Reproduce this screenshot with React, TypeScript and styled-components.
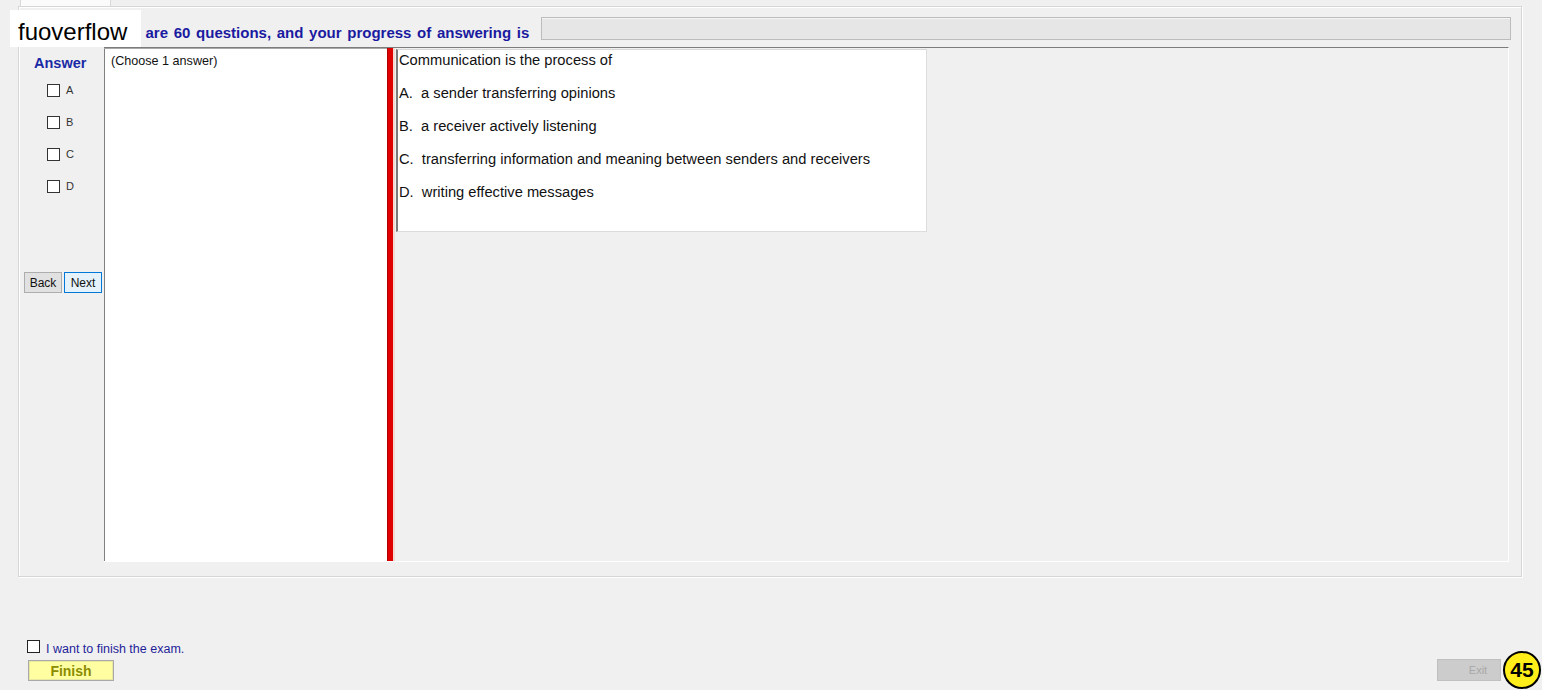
import styled, { createGlobalStyle } from "styled-components";

const GlobalStyle = createGlobalStyle`
  html, body {
    margin: 0;
    padding: 0;
    background: #f0f0f0;
  }
  * { box-sizing: border-box; }
`;

const Page = styled.div`
  position: relative;
  width: 1542px;
  height: 690px;
  overflow: hidden;
  background: #f0f0f0;
  font-family: "Liberation Sans", Arial, sans-serif;
  display: flex;
  flex-direction: column;
`;

const TabStrip = styled.div`
  height: 6px;
  padding-left: 20px;
  display: flex;
`;

const Tab = styled.div`
  width: 91px;
  height: 7px;
  background: #fbfbfb;
  border: 1px solid #d9d9d9;
  border-top: none;
  border-bottom: none;
`;

const GroupBox = styled.div`
  margin-left: 18px;
  width: 1504px;
  height: 571px;
  border: 1px solid #d6d6d6;
  box-shadow: inset 1px 1px 0 #ffffff, 1px 1px 0 #ffffff;
  display: flex;
  flex-direction: column;
  padding: 0 10px 14px 5px;
`;

const Header = styled.div`
  height: 40px;
  display: flex;
  align-items: flex-start;
`;

const Title = styled.div`
  flex: 0 0 517px;
  padding-left: 75px;
  margin-top: 17px;
  font-size: 15px;
  word-spacing: 1.5px;
  line-height: 17px;
  font-weight: bold;
  color: #1a1aa0;
  white-space: nowrap;
  overflow: hidden;
`;

const ProgressBar = styled.div`
  flex: 1;
  height: 23px;
  margin-top: 10px;
  background: #e6e6e6;
  border: 1px solid #bcbcbc;
  box-shadow: inset 0 1px 0 #f4f4f4;
`;

const Main = styled.div`
  flex: 1;
  display: flex;
  margin-right: 2px;
`;

const LeftCol = styled.div`
  width: 80px;
  display: flex;
  flex-direction: column;
  padding-top: 7px;
`;

const AnswerTitle = styled.div`
  padding-left: 10px;
  font-size: 14.5px;
  line-height: 18px;
  font-weight: bold;
  color: #1a2aa6;
`;

const OptionList = styled.div`
  margin-top: 2px;
  display: flex;
  flex-direction: column;
`;

const OptionRow = styled.label`
  height: 32px;
  display: flex;
  align-items: center;
  padding-left: 23px;
  font-size: 11px;
  color: #333;
`;

const Box = styled.span`
  display: inline-block;
  width: 13px;
  height: 13px;
  background: #ffffff;
  border: 1px solid #333;
  margin-right: 6px;
  flex-shrink: 0;
`;

const NavRow = styled.div`
  margin-top: 70px;
  display: flex;
  gap: 2px;
`;

const NavButton = styled.button<{ $focus?: boolean }>`
  width: 38px;
  height: 21px;
  padding: 0;
  font-family: "Liberation Sans", Arial, sans-serif;
  font-size: 12px;
  color: #111;
  background: ${(p) => (p.$focus ? "#e5f1fb" : "#e1e1e1")};
  border: 1px solid ${(p) => (p.$focus ? "#0078d7" : "#adadad")};
`;

const Workspace = styled.div`
  flex: 1;
  display: flex;
  border-top: 1px solid #7c7c7c;
  box-shadow: inset 0 1px 0 #a8a8a8;
  border-right: 1px solid #ffffff;
  border-bottom: 1px solid #ffffff;
`;

const ChoicePanel = styled.div`
  width: 283px;
  background: #ffffff;
  border-left: 1px solid #808080;
  margin-top: 1px;
  padding: 5px 0 0 6px;
  font-size: 12.6px;
  line-height: 14px;
  color: #111;
`;

const Splitter = styled.div`
  width: 8px;
  background: #e00000;
  border-left: 1px solid #b00000;
  border-right: 2px solid #f1d8d0;
`;

const RightArea = styled.div`
  flex: 1;
  background: #f0f0f0;
  padding: 1px 0 0 1px;
`;

const QuestionBox = styled.div`
  width: 531px;
  height: 183px;
  background: #ffffff;
  border-left: 2px solid #7a7a7a;
  border-top: 1px solid #d8d8d8;
  border-right: 1px solid #dcdcdc;
  border-bottom: 1px solid #dcdcdc;
  padding: 2px 0 0 1px;
`;

const QuestionLine = styled.div`
  font-size: 14.7px;
  line-height: 16px;
  margin-bottom: 17px;
  color: #111;
  white-space: pre;
`;

const Footer = styled.div`
  flex: 1;
  display: flex;
  justify-content: space-between;
  align-items: flex-end;
  padding-bottom: 9px;
`;

const FooterLeft = styled.div`
  display: flex;
  flex-direction: column;
`;

const FinishCheck = styled.label`
  height: 14px;
  display: flex;
  align-items: center;
  padding-left: 27px;
  font-size: 12.5px;
  color: #1f1f9a;
  margin-bottom: 4px;

  ${Box} {
    margin-top: -6px;
    border-color: #222;
  }
`;

const FinishButton = styled.button`
  margin-left: 28px;
  width: 86px;
  height: 21px;
  padding: 0;
  background: #ffffa2;
  border: 1px solid #a9a9a9;
  box-shadow: inset 0 0 0 1px #e8e8a0;
  font-family: "Liberation Sans", Arial, sans-serif;
  font-size: 14px;
  font-weight: bold;
  color: #8c8c00;
`;

const ExitButton = styled.button`
  margin-right: 41px;
  width: 64px;
  height: 22px;
  padding: 0 0 0 18px;
  background: #cccccc;
  border: 1px solid #c0c0c0;
  font-family: "Liberation Sans", Arial, sans-serif;
  font-size: 11px;
  color: #a8a8a8;
`;

const Watermark = styled.div`
  position: absolute;
  left: 10px;
  top: 10px;
  width: 131px;
  height: 37px;
  background: #ffffff;
  padding-left: 8px;
  font-size: 24px;
  line-height: 43px;
  color: #000;
`;

const Badge = styled.div`
  position: absolute;
  right: 1px;
  bottom: 1px;
  width: 38px;
  height: 38px;
  border-radius: 50%;
  background: #ffee1a;
  border: 2px solid #000;
  display: flex;
  align-items: center;
  justify-content: center;
  font-size: 21px;
  font-weight: bold;
  color: #000;
`;

const options = ["A", "B", "C", "D"];

const question = [
  "Communication is the process of",
  "A.  a sender transferring opinions",
  "B.  a receiver actively listening",
  "C.  transferring information and meaning between senders and receivers",
  "D.  writing effective messages",
];

export default function App() {
  return (
    <>
      <GlobalStyle />
      <Page>
        <TabStrip>
          <Tab />
        </TabStrip>
        <GroupBox>
          <Header>
            <Title>There are 60 questions, and your progress of answering is</Title>
            <ProgressBar />
          </Header>
          <Main>
            <LeftCol>
              <AnswerTitle>Answer</AnswerTitle>
              <OptionList>
                {options.map((o) => (
                  <OptionRow key={o}>
                    <Box />
                    {o}
                  </OptionRow>
                ))}
              </OptionList>
              <NavRow>
                <NavButton>Back</NavButton>
                <NavButton $focus>Next</NavButton>
              </NavRow>
            </LeftCol>
            <Workspace>
              <ChoicePanel>(Choose 1 answer)</ChoicePanel>
              <Splitter />
              <RightArea>
                <QuestionBox>
                  {question.map((q) => (
                    <QuestionLine key={q}>{q}</QuestionLine>
                  ))}
                </QuestionBox>
              </RightArea>
            </Workspace>
          </Main>
        </GroupBox>
        <Footer>
          <FooterLeft>
            <FinishCheck>
              <Box />I want to finish the exam.
            </FinishCheck>
            <FinishButton>Finish</FinishButton>
          </FooterLeft>
          <ExitButton disabled>Exit</ExitButton>
        </Footer>
        <Watermark>fuoverflow</Watermark>
        <Badge>45</Badge>
      </Page>
    </>
  );
}
